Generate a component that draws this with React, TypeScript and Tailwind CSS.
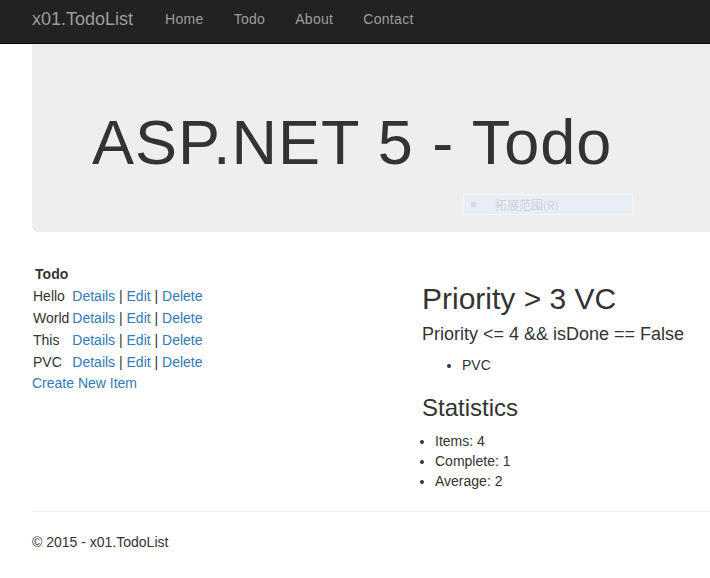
import React from "react";

const todos = ["Hello", "World", "This", "PVC"];

export default function App() {
  return (
    <div
      className="min-h-screen w-full overflow-x-hidden bg-white text-[14px] leading-5 text-[#333]"
      style={{ fontFamily: '"Liberation Sans", Arial, sans-serif' }}
    >
      {/* navbar */}
      <nav className="flex h-[44px] items-center border-b border-[#080808] bg-[#222] pb-[6px] pl-8">
        <a className="pr-[17px] text-[18px] leading-5 text-[#9d9d9d]">x01.TodoList</a>
        <ul className="flex">
          {["Home", "Todo", "About", "Contact"].map((l) => (
            <li key={l}>
              <a className="block px-[15px] pt-[1px] text-[14px] tracking-[0.3px] text-[#9d9d9d]">{l}</a>
            </li>
          ))}
        </ul>
      </nav>

      <div className="pl-8">
        {/* jumbotron */}
        <div className="relative h-[188px] rounded-bl-[6px] bg-[#eee] pl-[60px] pt-[64px]">
          <h1 className="m-0 whitespace-nowrap text-[63px] leading-[1.1] tracking-[1px] font-normal text-[#333]">
            ASP.NET 5 - Todo
          </h1>
          <div className="absolute left-[431px] top-[150px] flex h-[21px] w-[170px] items-center border border-[#f3f5f8] bg-[#e9eef4] pl-[7px]">
            <span className="mr-[19px] h-[5px] w-[5px] bg-[#d5d9de]" />
            <span
              className="text-[12px] text-[#cfd3d8]"
              style={{ fontFamily: '"Noto Sans CJK SC", sans-serif' }}
            >
              拓展范围(R)
            </span>
          </div>
        </div>

        {/* body */}
        <div className="mt-[31px] flex">
          <div className="w-[390px] shrink-0">
            <table className="border-collapse">
              <thead>
                <tr>
                  <th className="py-px pr-px text-center font-bold">Todo</th>
                  <th />
                </tr>
              </thead>
              <tbody>
                {todos.map((t) => (
                  <tr key={t}>
                    <td className="py-px pl-px pr-[3px]">{t}</td>
                    <td className="py-px">
                      <a className="text-[#337ab7]">Details</a> |{" "}
                      <a className="text-[#337ab7]">Edit</a> |{" "}
                      <a className="text-[#337ab7]">Delete</a>
                    </td>
                  </tr>
                ))}
              </tbody>
            </table>
            <a className="block text-[#337ab7]">Create New Item</a>
          </div>

          <div className="-mt-px flex-1">
            <h2 className="mt-[20px] mb-[10px] whitespace-nowrap text-[30px] leading-[1.1] font-normal">
              Priority &gt; 3 VC
            </h2>
            <h4 className="mb-[10px] whitespace-nowrap text-[18px] leading-[1.1] font-normal">
              Priority &lt;= 4 &amp;&amp; isDone == False
            </h4>
            <ul className="mb-[10px] list-disc pl-[40px]">
              <li>PVC</li>
            </ul>
            <h3 className="mt-[20px] mb-[10px] text-[24px] leading-[1.1] font-normal">Statistics</h3>
            <ul className="list-disc pl-[13px]">
              <li>Items: 4</li>
              <li>Complete: 1</li>
              <li>Average: 2</li>
            </ul>
          </div>
        </div>

        <hr className="mt-[20px] mb-[20px] border-t border-[#eee]" />
        <footer>
          <p>© 2015 - x01.TodoList</p>
        </footer>
      </div>
    </div>
  );
}
